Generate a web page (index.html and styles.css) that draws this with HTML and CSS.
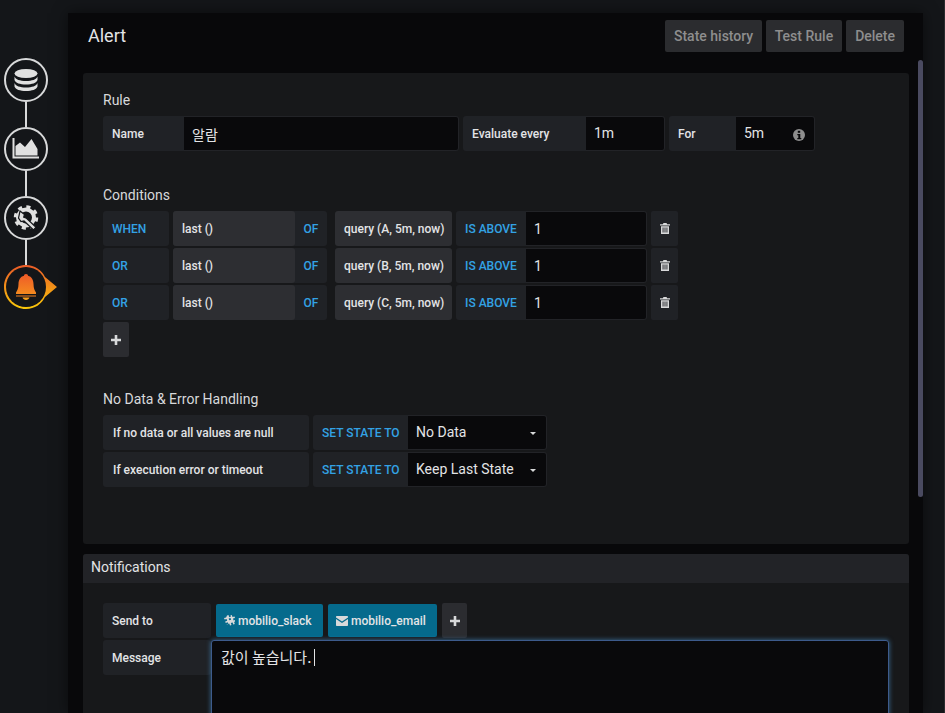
FILE: index.html
```html
<!DOCTYPE html>
<html>
<head>
    <meta charset="utf-8">
    <title>Alert</title>
    <link rel="stylesheet" href="styles.css">
</head>
<body>
    <div class="side-nav">
        <div class="nav-step">
            <svg width="44" height="44" viewBox="0 0 44 44">
                <circle cx="22" cy="22" r="21" fill="#141619" stroke="#d8d9da" stroke-width="2"/>
                <ellipse cx="22" cy="15.500" rx="11.500" ry="4.500" fill="#e0e0e0"/>
                <path d="M10.500 18.500c1 3 5.500 4.500 11.500 4.500s10.500-1.500 11.500-4.500v3.500c-1 3-5.500 4.500-11.500 4.500s-10.500-1.500-11.500-4.500z" fill="#e0e0e0"/>
                <path d="M10.500 25c1 3 5.500 4.500 11.500 4.500s10.500-1.500 11.500-4.500v3.500c-1 3-5.500 4.500-11.500 4.500s-10.500-1.500-11.500-4.500z" fill="#e0e0e0"/>
            </svg>
        </div>
        <div class="nav-line"></div>
        <div class="nav-step">
            <svg width="44" height="44" viewBox="0 0 44 44">
                <circle cx="22" cy="22" r="21" fill="#141619" stroke="#d8d9da" stroke-width="2"/>
                <path d="M8.500 11h2v18.500h24.500v2H8.500z" fill="#e0e0e0"/>
                <path d="M11.500 28.500V19l4.500-3.500 5 4.500 6.500-8 6 10v6.500z" fill="#e0e0e0"/>
            </svg>
        </div>
        <div class="nav-line"></div>
        <div class="nav-step">
            <svg width="44" height="44" viewBox="0 0 44 44">
                <circle cx="22" cy="22" r="21" fill="#141619" stroke="#d8d9da" stroke-width="2"/>
                <circle cx="22" cy="21.500" r="8" fill="none" stroke="#e0e0e0" stroke-width="4"/>
                <circle cx="22" cy="21.500" r="10.500" fill="none" stroke="#e0e0e0" stroke-width="3.500" stroke-dasharray="4 4.250"/>
                <path d="M16 15l4.500 3.500-.8 2.700 2.800 1 9.500 9-2.500 2.800-9.500-9-3 .5-2.500-3.500z" fill="#e0e0e0" stroke="#141619" stroke-width="1.200"/>
            </svg>
        </div>
        <div class="nav-line"></div>
        <div class="nav-step nav-active">
            <svg width="54" height="44" viewBox="0 0 54 44">
                <defs>
                    <linearGradient id="alertGrad" x1="0" y1="0" x2="0" y2="1">
                        <stop offset="0" stop-color="#eb5a28"/>
                        <stop offset="1" stop-color="#fbca0a"/>
                    </linearGradient>
                    <linearGradient id="bellGrad" x1="0" y1="0" x2="0" y2="1">
                        <stop offset="0" stop-color="#ee5a28"/>
                        <stop offset="1" stop-color="#f58a1f"/>
                    </linearGradient>
                </defs>
                <path d="M22 0C30.500 0 38 5 41 12l12 10-12 10C38 39 30.500 44 22 44 9.850 44 0 34.150 0 22S9.850 0 22 0z" fill="url(#alertGrad)"/>
                <circle cx="22" cy="22" r="20" fill="#141619"/>
                <path d="M22 9c1.300 0 2 .8 2 1.800 3.800 .9 5.500 4.300 5.500 8.200 0 4.500 1.300 6.500 2.500 8.500v1.500H12v-1.500c1.200-2 2.500-4 2.500-8.500 0-3.900 1.700-7.300 5.500-8.200C20 9.800 20.700 9 22 9z" fill="url(#bellGrad)"/>
                <path d="M12 30.500h20v1H12z" fill="#f48020"/>
                <path d="M18.500 32.500h7c-.5 1.600-1.800 2.500-3.500 2.500s-3-.9-3.500-2.500z" fill="#f9a01b"/>
            </svg>
        </div>
    </div>

    <div class="main">
        <div class="page-header">
            <h1 class="page-title">Alert</h1>
            <div class="header-buttons">
                <button class="btn-inverse btn-history">State history</button>
                <button class="btn-inverse">Test Rule</button>
                <button class="btn-inverse">Delete</button>
            </div>
        </div>

        <div class="panel rule-panel">
            <div class="section">
                <h5 class="section-title">Rule</h5>
                <div class="form-row">
                    <div class="group">
                        <span class="label w-name">Name</span>
                        <span class="input w-name-input korean">알람</span>
                    </div>
                    <div class="group">
                        <span class="label w-every">Evaluate every</span>
                        <span class="input w-every-input">1m</span>
                    </div>
                    <div class="group">
                        <span class="label w-for">For</span>
                        <span class="input w-for-input">
                            5m
                            <svg class="info-icon" width="12" height="12" viewBox="0 0 12 12">
                                <circle cx="6" cy="6" r="6" fill="#8e8e8e"/>
                                <rect x="4.800" y="1.800" width="2.400" height="2" fill="#09090b"/>
                                <path d="M4.300 5h3v4h1v1.300H4.300V9h1V6.200h-1z" fill="#09090b"/>
                            </svg>
                        </span>
                    </div>
                </div>
            </div>

            <div class="section">
                <h5 class="section-title">Conditions</h5>
                <div class="form-row">
                    <span class="label blue w-when">WHEN</span>
                    <div class="func">
                        <span class="func-name">last ()</span>
                        <span class="func-of">OF</span>
                    </div>
                    <span class="query">query (A, 5m, now)</span>
                    <div class="group-tight">
                        <span class="label blue w-above">IS ABOVE</span>
                        <span class="input w-value">1</span>
                    </div>
                    <span class="icon-btn w-trash">
                        <svg width="10" height="11" viewBox="0 0 10 11"><path d="M3.500 0h3l.7 1.300H10v1.200H0V1.300h2.800zM1 3.200h8V11H1zM2.600 4.500v5h.9v-5zM4.550 4.500v5h.9v-5zM6.500 4.500v5h.9v-5z" fill="#d8d9da" fill-rule="evenodd"/></svg>
                    </span>
                </div>
                <div class="form-row">
                    <span class="label blue w-when">OR</span>
                    <div class="func">
                        <span class="func-name">last ()</span>
                        <span class="func-of">OF</span>
                    </div>
                    <span class="query">query (B, 5m, now)</span>
                    <div class="group-tight">
                        <span class="label blue w-above">IS ABOVE</span>
                        <span class="input w-value">1</span>
                    </div>
                    <span class="icon-btn w-trash">
                        <svg width="10" height="11" viewBox="0 0 10 11"><path d="M3.500 0h3l.7 1.300H10v1.200H0V1.300h2.800zM1 3.200h8V11H1zM2.600 4.500v5h.9v-5zM4.550 4.500v5h.9v-5zM6.500 4.500v5h.9v-5z" fill="#d8d9da" fill-rule="evenodd"/></svg>
                    </span>
                </div>
                <div class="form-row">
                    <span class="label blue w-when">OR</span>
                    <div class="func">
                        <span class="func-name">last ()</span>
                        <span class="func-of">OF</span>
                    </div>
                    <span class="query">query (C, 5m, now)</span>
                    <div class="group-tight">
                        <span class="label blue w-above">IS ABOVE</span>
                        <span class="input w-value">1</span>
                    </div>
                    <span class="icon-btn w-trash">
                        <svg width="10" height="11" viewBox="0 0 10 11"><path d="M3.500 0h3l.7 1.300H10v1.200H0V1.300h2.800zM1 3.200h8V11H1zM2.600 4.500v5h.9v-5zM4.550 4.500v5h.9v-5zM6.500 4.500v5h.9v-5z" fill="#d8d9da" fill-rule="evenodd"/></svg>
                    </span>
                </div>
                <div class="form-row">
                    <span class="icon-btn w-plus">
                        <svg width="10" height="10" viewBox="0 0 10 10"><path d="M3.700 0h2.600v3.700H10v2.600H6.300V10H3.700V6.300H0V3.700h3.700z" fill="#d8d9da"/></svg>
                    </span>
                </div>
            </div>

            <div class="section no-data">
                <h5 class="section-title">No Data &amp; Error Handling</h5>
                <div class="form-row">
                    <span class="label w-nodata">If no data or all values are null</span>
                    <div class="group-tight">
                        <span class="label blue w-state">SET STATE TO</span>
                        <span class="input select w-select">No Data<i class="caret"></i></span>
                    </div>
                </div>
                <div class="form-row">
                    <span class="label w-nodata">If execution error or timeout</span>
                    <div class="group-tight">
                        <span class="label blue w-state">SET STATE TO</span>
                        <span class="input select w-select">Keep Last State<i class="caret"></i></span>
                    </div>
                </div>
            </div>
        </div>

        <div class="panel notify-panel">
            <div class="panel-heading">Notifications</div>
            <div class="notify-body">
                <div class="form-row">
                    <span class="label w-send">Send to</span>
                    <span class="chip chip-slack">
                        <svg width="11" height="11" viewBox="0 0 11 11"><path d="M3 .5l1.500-.5.700 2.200 1.800-.6L6.300.5 7.800 0l.7 2.100L10.500 1.500l.5 1.500-2 .6.600 1.800 1.400-.5.500 1.500-1.400.5.700 2-1.500.5-.7-2-1.800.6.700 2-1.500.5-.7-2-2 .6L2.300 9.700l2-.6-.6-1.800-2 .6L1.200 6.400l2-.6-.6-1.800-2 .6L0 3.100l2.100-.7z M4.700 3.500l.6 1.800 1.800-.6-.6-1.800z" fill="#d8d9da" fill-rule="evenodd"/></svg>
                        mobilio_slack
                    </span>
                    <span class="chip chip-email">
                        <svg width="12" height="10" viewBox="0 0 12 10"><path d="M1 0h10c.6 0 1 .4 1 1v.6L6 5.500 0 1.600V1c0-.6.400-1 1-1zM0 3l6 3.900L12 3v6c0 .6-.4 1-1 1H1c-.6 0-1-.4-1-1z" fill="#d8d9da"/></svg>
                        mobilio_email
                    </span>
                    <span class="icon-btn w-add">
                        <svg width="10" height="10" viewBox="0 0 10 10"><path d="M3.700 0h2.600v3.700H10v2.600H6.300V10H3.700V6.300H0V3.700h3.700z" fill="#d8d9da"/></svg>
                    </span>
                </div>
                <div class="message-row">
                    <span class="label w-send">Message</span>
                    <div class="message-box korean">값이 높습니다.<i class="text-cursor"></i></div>
                </div>
            </div>
        </div>

        <div class="scrollbar"></div>
    </div>
</body>
</html>
```

FILE: styles.css
```css
html, body {
    height: 713px;
    overflow: hidden;
}
body {
    display: flex;
    margin: 0;
    background: #141619;
    color: #e3e4e6;
    font-family: Roboto, "Noto Sans CJK KR", sans-serif;
    font-size: 13px;
    border-right: 1px solid #2a2b2e;
    box-sizing: border-box;
}
.side-nav {
    width: 68px;
    flex: none;
    box-sizing: border-box;
    padding: 58px 0 0 4px;
}
.nav-step {
    height: 44px;
}
.nav-step svg {
    display: block;
}
.nav-line {
    width: 2px;
    height: 25px;
    margin-left: 21px;
    background: #d8d9da;
}
.main {
    position: relative;
    width: 855px;
    height: 700px;
    flex: none;
    margin-top: 13px;
    background: #08080a;
    box-shadow: 0 0 14px rgba(0,0,0,0.5);
    overflow: hidden;
}
.page-header {
    display: flex;
    justify-content: space-between;
    height: 60px;
    padding: 7px 19px 0 20px;
    box-sizing: border-box;
}
.page-title {
    margin: 4px 0 0;
    font-size: 18px;
    line-height: 24px;
    font-weight: 400;
    color: #e3e4e6;
}
.header-buttons {
    display: flex;
    gap: 4px;
}
.btn-inverse {
    height: 32px;
    padding: 0 9px;
    border: 0;
    border-radius: 2px;
    background: #2b2c2f;
    color: #8e8e8e;
    font-family: inherit;
    font-size: 14px;
    font-weight: 500;
}
.btn-history {
    padding: 0 8.500px;
}
.panel {
    width: 826px;
    margin-left: 15px;
    background: #17181a;
    border-radius: 3px;
}
.rule-panel {
    padding: 17px 20px 57px;
    box-sizing: border-box;
}
.section {
    margin-bottom: 34px;
}
.section:last-child {
    margin-bottom: 0;
}
.section.no-data {
    margin-top: -2px;
}
.section-title {
    margin: 0 0 5px;
    font-size: 14px;
    line-height: 21px;
    font-weight: 400;
    color: #d8d9da;
}
.form-row {
    display: flex;
    gap: 4px;
    height: 35px;
    margin-bottom: 2px;
}
.form-row:last-child {
    margin-bottom: 0;
}
.group, .group-tight {
    display: flex;
}
.label {
    display: flex;
    align-items: center;
    box-sizing: border-box;
    height: 35px;
    padding-left: 9px;
    background: #202226;
    border-radius: 3px 0 0 3px;
    font-size: 12px;
    font-weight: 500;
    white-space: nowrap;
}
.label.blue {
    color: #33a2e5;
}
.w-when {
    width: 66px;
    border-radius: 3px;
}
.input {
    display: flex;
    align-items: center;
    box-sizing: border-box;
    position: relative;
    height: 35px;
    padding-left: 8px;
    background: #09090b;
    border: 1px solid #222327;
    border-left: 0;
    border-radius: 0 3px 3px 0;
    color: #e3e4e6;
    font-size: 14px;
}
.select {
    padding-bottom: 2px;
}
.w-name { width: 81px; }
.w-name-input { width: 275px; }
.w-every { width: 123px; }
.w-every-input { width: 79px; padding-bottom: 2px; }
.w-for { width: 67px; }
.w-for-input { width: 79px; padding-bottom: 2px; }
.korean {
    font-family: "Noto Sans CJK KR", sans-serif;
}
.info-icon {
    position: absolute;
    right: 9px;
    top: 12px;
}
.func {
    display: flex;
    width: 154px;
    margin-right: 4px;
    background: #202226;
    border-radius: 3px;
}
.func-name {
    display: flex;
    align-items: center;
    width: 122px;
    padding-left: 9px;
    box-sizing: border-box;
    background: #2d2e32;
    border-radius: 3px;
    font-size: 12px;
    font-weight: 500;
}
.func-of {
    display: flex;
    align-items: center;
    justify-content: center;
    width: 32px;
    color: #33a2e5;
    font-size: 12px;
    font-weight: 500;
}
.query {
    display: flex;
    align-items: center;
    width: 117px;
    padding-left: 9px;
    box-sizing: border-box;
    background: #2d2e32;
    border-radius: 3px;
    font-size: 12px;
    font-weight: 500;
}
.w-above { width: 70px; }
.w-value { width: 121px; }
.icon-btn {
    display: flex;
    align-items: center;
    justify-content: center;
    background: #202226;
    border-radius: 2px;
}
.w-trash { width: 27px; }
.w-plus { width: 26px; background: #2b2c30; }
.w-nodata { width: 206px; padding-left: 10px; border-radius: 3px; }
.w-state { width: 95px; }
.w-select { width: 139px; }
.caret {
    position: absolute;
    right: 10px;
    top: 16px;
    border-top: 3.500px solid #d8d9da;
    border-left: 3.500px solid transparent;
    border-right: 3.500px solid transparent;
}
.notify-panel {
    height: 300px;
    margin-top: 10px;
}
.panel-heading {
    height: 29px;
    padding-left: 8px;
    background: #222327;
    border-radius: 3px 3px 0 0;
    font-size: 14px;
    line-height: 27px;
}
.notify-body {
    padding: 20px 20px 0;
}
.w-send { width: 108px; border-radius: 3px; }
.chip {
    display: flex;
    align-items: center;
    gap: 3px;
    box-sizing: border-box;
    height: 33px;
    margin: 1px 1px 0 0;
    padding-left: 8px;
    background: #056a8c;
    border-radius: 2px;
    font-size: 12px;
    font-weight: 500;
}
.chip-slack {
    width: 107px;
    margin-left: 1px;
}
.chip-email {
    width: 109px;
}
.w-add {
    width: 25px;
    background: #2b2c30;
}
.message-row {
    display: flex;
}
.message-box {
    flex: none;
    width: 678px;
    height: 200px;
    padding: 6px 9px;
    box-sizing: border-box;
    background: #09090b;
    border: 1px solid #3d5b8c;
    box-shadow: 0 0 5px rgba(82,168,236,0.6);
    border-radius: 3px;
    color: #e3e4e6;
    font-size: 15px;
    line-height: 20px;
}
.text-cursor {
    display: inline-block;
    width: 1px;
    height: 17px;
    margin-left: 3px;
    vertical-align: -3px;
    background: #e3e4e6;
}
.scrollbar {
    position: absolute;
    top: 47px;
    right: 0;
    width: 5px;
    height: 437px;
    border-radius: 3px;
    background: #4a4a60;
}
```
